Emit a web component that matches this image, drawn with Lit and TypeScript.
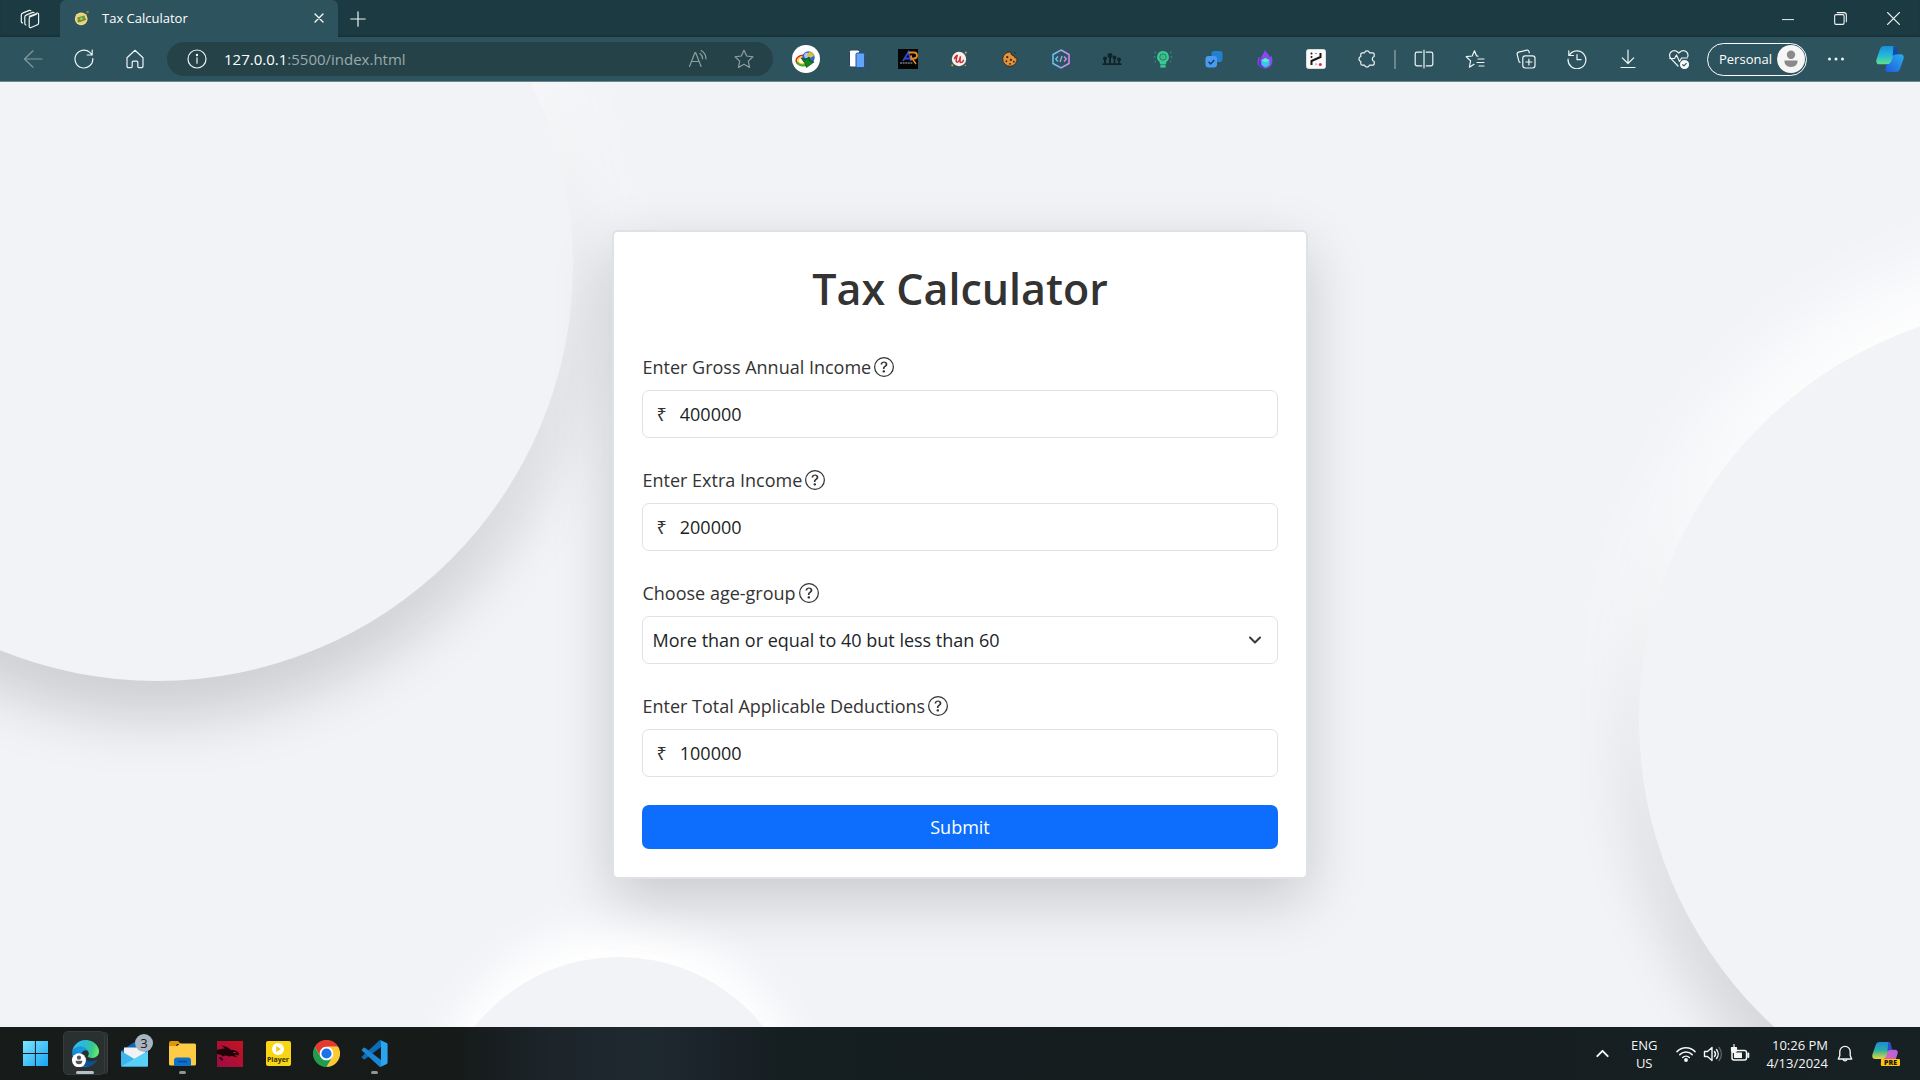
import { LitElement, html, css, svg, nothing } from "lit";
import { customElement, property } from "lit/decorators.js";

const line = (body: unknown, size = 20) => html`<svg
  class="icon"
  width=${size}
  height=${size}
  viewBox="0 0 20 20"
  fill="none"
  stroke="currentColor"
  stroke-width="1.2"
  stroke-linecap="round"
  stroke-linejoin="round"
  aria-hidden="true"
>${body}</svg>`;

const art = (body: unknown, size = 20, box = "0 0 20 20") => html`<svg
  class="icon"
  width=${size}
  height=${size}
  viewBox=${box}
  aria-hidden="true"
>${body}</svg>`;

const workspaces = svg`<path d="M9.200 7.200 16 4.800a1.400 1.400 0 0 1 2.600 1V14a2 2 0 0 1-1.200 1.800l-6.200 2.700a1.400 1.400 0 0 1-2-1.300V9.500a2 2 0 0 1 1.300-1.800l6-2.400"/><path d="M5.900 16a1.400 1.400 0 0 1-1.100-1.400V8a2 2 0 0 1 1.300-1.900l6.600-2.700a1.500 1.500 0 0 1 1.400.3"/><path d="M2.500 13.900A1.400 1.400 0 0 1 1.300 12.500V6a2 2 0 0 1 1.300-1.900l6.700-2.700a1.500 1.500 0 0 1 1.500.3"/>`;

const taxFavicon = svg`<circle cx="9" cy="11" r="8" fill="#f4dc8e"/><circle cx="9" cy="11" r="6.500" fill="#ecd07a"/><path d="M4 9.500 13 7l1.500 5-9 3z" fill="#6a9a3c"/><path d="m4.500 13 1 2 9-3-.4-1.500" stroke="#4c7c2c" fill="none"/><circle cx="9.200" cy="11" r="1.700" fill="#a8c66c"/><circle cx="17" cy="2.600" r="1.600" fill="#9a7a2c"/>`;

const back = svg`<path d="M19 10H1.500M10 1.800 1.500 10l8.500 8.200"/>`;
const reload = svg`<path d="M18.800 9.600A8.900 8.900 0 1 1 15.800 3.400L18 5.600M18.200 1v5h-5"/>`;
const home = svg`<path d="M2 8.700 10 1.300l8 7.400v8.600a1.300 1.300 0 0 1-1.300 1.300h-2.900a1 1 0 0 1-1-1v-4.400a1 1 0 0 0-1-1H8.200a1 1 0 0 0-1 1v4.400a1 1 0 0 1-1 1H3.300A1.300 1.300 0 0 1 2 17.300z"/>`;
const info = svg`<circle cx="10" cy="10" r="9"/><path d="M10 8.800v5.400"/><circle cx="10" cy="6" r=".6" fill="currentColor"/>`;
const readAloud = svg`<path d="m1.500 17.500 5.500-14h.6l5.500 14M3.500 12.500h7.600"/><path d="M12 4.500a7 7 0 0 1 2.600 5.300M13.200 1.500a10 10 0 0 1 4.800 8.300"/>`;
const star = svg`<path d="m10 1.200 2.700 5.800 6.300.8-4.700 4.300 1.200 6.300L10 15.300l-5.500 3.100 1.200-6.300L1 7.800 7.300 7z"/>`;
const puzzle = svg`<path d="M7.500 3.800a2.600 2.600 0 0 1 5 0h3.200A1.500 1.500 0 0 1 17.200 5.300V7.500a2.600 2.600 0 0 0 0 5v2.200a1.500 1.500 0 0 1-1.500 1.500h-3.200a2.600 2.600 0 0 1-5 0H5.300a1.500 1.500 0 0 1-1.500-1.500v-2.200a2.600 2.600 0 0 1 0-5V5.300a1.500 1.500 0 0 1 1.500-1.500z"/>`;
const splitView = svg`<path d="M7.800 3.200H3A1.800 1.800 0 0 0 1.200 5v10A1.800 1.800 0 0 0 3 16.800h4.800M12.200 3.200H17A1.800 1.800 0 0 1 18.800 5v10a1.800 1.800 0 0 1-1.800 1.800h-4.800M10 1v18"/>`;
const favourites = svg`<path d="M13 7.200 11.600 7 9.500 1.800 7.200 7 1.200 7.700l4.400 4.200-1.200 6.300L9 15.300M13 10h6M12 13.500h7M14 17h5"/>`;
const collections = svg`<rect x="6.800" y="6.800" width="12.200" height="12.200" rx="2.400"/><path d="M12.900 10v6M9.900 13h6"/><path d="M4 13.400a2 2 0 0 1-1.200-1.500L1.200 5.600a2 2 0 0 1 1.400-2.400l8-2a2 2 0 0 1 2.400 1.400l.3 1.200"/>`;
const history = svg`<path d="M1.800 1.800v4.700h4.700M2.300 6.300A8.900 8.900 0 1 1 1.100 10M10 5.500v5.200h4"/>`;
const download = svg`<path d="M10 1v13M4.300 8.800 10 14.500l5.700-5.700M3 18.500h14"/>`;
const essentials = svg`<path d="M9 17 2 9.700A4.600 4.600 0 0 1 2 3a4.600 4.600 0 0 1 6.600 0l1.200 1.200L11 3a4.600 4.600 0 0 1 6.600 0 4.700 4.700 0 0 1 1 5"/><path d="M.8 9.500h4.700L7.500 6l3 6.500L12.600 9h5.600"/><circle cx="15.500" cy="15.500" r="4" fill="#fff"/><path d="m13.700 15.700 1.300 1.200 2.300-2.500" stroke="#2d545e"/>`;

const idm = svg`<circle cx="14" cy="14" r="14" fill="#fff"/><ellipse cx="10" cy="15" rx="6" ry="4.600" fill="none" stroke="#e0261c" stroke-width="1.600" transform="rotate(-20 10 15)"/><ellipse cx="10.500" cy="15.500" rx="4.600" ry="3.500" fill="none" stroke="#f5d21c" stroke-width="1.500"/><path d="M5 17c2 3.500 6 4 9 3" stroke="#35b52c" stroke-width="2" fill="none"/><circle cx="16.500" cy="12.500" r="6.200" fill="#2f63c9"/><circle cx="14.800" cy="10.400" r="2.700" fill="#a8c8f4"/><path d="M17 7c3 0 5 2 5 4l-4 2-3-3z" fill="#d4c234"/><path d="m9 13 4.500 1.500L17 12l.500 3.500L22 17l-7.500 5.500L13 18.500z" fill="#0f8a1c" stroke="#052a08" stroke-width=".6"/>`;
const pages = svg`<rect x="2.500" y="1" width="10" height="17" rx="1.500" fill="#fff" stroke="#2c4464"/><rect x="9" y="4" width="8.500" height="14.500" rx="1.300" fill="#62a4f5" stroke="#24509a"/>`;
const apLogo = svg`<rect width="20" height="20" fill="#050505"/><path d="m5 12 5.500-9L13 12M7 9.500h5" fill="none" stroke="#3548c8" stroke-width="1.800"/><path d="M10.500 3.500H16a3 3 0 0 1 0 6l-2.500.5L13 6.500" fill="none" stroke="#e88a24" stroke-width="1.800"/><path d="M14.500 10 18 15" stroke="#e88a24" stroke-width="1.500"/><path d="M2 14h13" stroke="#b0b0b0" stroke-width="1.200" stroke-dasharray="2 .6"/>`;
const redU = svg`<circle cx="10" cy="10" r="8" fill="#fbeee6"/><path d="M5 9.500c1-2.500 2-3.500 3-3.500-1 3.500-2 7.500 0 7.500s3-3.500 3.600-6.500c-.6 3.500-1 7 .6 7s2-1 2.800-2.500" fill="none" stroke="#c4303a" stroke-width="1.700" stroke-linecap="round"/><circle cx="17.500" cy="3" r="1.200" fill="#c8a43c"/><circle cx="2.500" cy="17" r="1.200" fill="#c8a43c"/><circle cx="17" cy="17.300" r=".8" fill="#c8a43c"/>`;
const cookie = svg`<path d="M11 2.200A8 8 0 1 0 17.800 9a3 3 0 0 1-3.400-2.600A3.400 3.400 0 0 1 11 2.200z" fill="#e0923c" stroke="#3a2416"/><g fill="#3a2012"><circle cx="7" cy="8" r="1.200"/><circle cx="11" cy="11" r="1.200"/><circle cx="6" cy="12.500" r="1"/><circle cx="10" cy="15.400" r="1"/><circle cx="14.300" cy="13" r="1"/><circle cx="15.500" cy="3" r=".8"/></g>`;
const hexCode = svg`<defs><linearGradient id="hx" x1="0" x2="1"><stop offset="0" stop-color="#62c8f0"/><stop offset="1" stop-color="#e088f0"/></linearGradient></defs><path d="m10 1 8 4.500v9L10 19l-8-4.500v-9z" fill="none" stroke="url(#hx)" stroke-width="1.500"/><path d="M7 7.500 4.700 10 7 12.500M13 7.500l2.300 2.500-2.300 2.500M11 7l-2 6" fill="none" stroke="url(#hx)" stroke-width="1.300"/>`;
const people = svg`<g fill="#10242a"><circle cx="3" cy="9.500" r="2"/><circle cx="8" cy="6.500" r="2.500"/><circle cx="12.500" cy="8.500" r="2"/><circle cx="17" cy="10.500" r="2"/><path d="M2 10h2v5H2zM7 8h2v7H7zM11.700 9h1.600v6h-1.600zM16.200 11h1.600v4h-1.600zM.5 14.300h19V16H.5z"/></g>`;
const bulb = svg`<path d="M10 2a6 6 0 0 1 3.500 10.800L13 15H7l-.5-2.200A6 6 0 0 1 10 2z" fill="#3cc890"/><circle cx="10" cy="8" r="3.200" fill="none" stroke="#1f7c62"/><path d="M10 6.500v3M7.500 15.700h5v2.800h-5z" fill="#3cc890" stroke="#2a9c78"/><path d="M1.500 3 3 4M.8 8h1.700M1.800 13 3 12M18.500 3 17 4m2.200 4h-1.700m.7 5L17 12" stroke="#3ba484"/>`;
const checks = svg`<rect x="7.500" y="2" width="11" height="11" rx="3" fill="#2380d0"/><rect x="1.500" y="7" width="11.500" height="11.500" rx="3" fill="#4a9af0"/><path d="m4.500 12.800 2.200 2.200 3.600-4" fill="none" stroke="#173f70" stroke-width="1.500"/>`;
const flame = svg`<path d="M10 .5c1 3.500 4.500 4.500 4.500 8 1-.5 1.300-1.500 1.300-2.500 3 5 2.200 13-5.800 13.500C2 19 1 12 4.500 7.500c0 1.500.5 2.500 1.500 3C6 6 9.500 5 10 .5z" fill="#8a48f0"/><path d="M5 9c-3 5-1 9 4 10.300L6 15z" fill="#5a30d0"/><path d="m10.500 9 4 2.300v4.600l-4 2.600-4-2.600v-4.600z" fill="#38c8e0"/><path d="m10.500 9 4 2.300-4 2.300-4-2.300z" fill="#58f0c8"/>`;
const scatter = svg`<rect x=".5" y=".5" width="19" height="19" rx="2" fill="#fbfbfb" stroke="#dcdcdc"/><path d="M5.500 16v-4L14.500 8V4" fill="none" stroke="#161616" stroke-width="2"/><g fill="#161616"><circle cx="5.500" cy="4.500" r="1"/><circle cx="5.500" cy="8" r="1"/><circle cx="10" cy="4.500" r=".6"/><circle cx="10" cy="15" r=".6"/></g><circle cx="14.300" cy="15.500" r="1.500" fill="#e02458"/>`;

const copilot = (id: string, stops: string[]) => svg`<defs>
  <linearGradient id="${id}a" x1="0" y1="0" x2="0" y2="1"><stop offset="0" stop-color=${stops[0]}/><stop offset=".5" stop-color=${stops[1]}/><stop offset="1" stop-color=${stops[2]}/></linearGradient>
  <linearGradient id="${id}b" x1="1" y1="0" x2="0" y2="1"><stop offset="0" stop-color=${stops[3]}/><stop offset="1" stop-color=${stops[4]}/></linearGradient></defs>
  <path d="M8 1h9.500c2.300 0 2.700 2 2 4l-3.200 10.500C15.500 18 14 19.300 12 19.300H3.500C.5 19.300-.3 17 .6 14L4 4.300C4.700 2.200 6 1 8 1z" fill="url(#${id}a)"/>
  <path d="M20.500 9.300h4c3 0 3.800 2 2.900 5L24 24c-.7 2-2 3-4 3h-8c-2.500 0-3-1.500-2.400-3.500.3-1 .8-2.600 1-4.200 2.500.3 4-1 5-4l1.500-4c.6-1.300 1.700-2 3.400-2z" fill="url(#${id}b)"/>
  <path d="M17.500 1c1.700.2 2.500 1.500 3 3.300l1.500 5h-2.400c-1.500 0-2.500.9-3 2.300z" fill=${stops[5]}/>`;

const windowsLogo = svg`<defs><linearGradient id="wl" x1="0" y1="0" x2="1" y2="1"><stop offset="0" stop-color="#7ce4ff"/><stop offset="1" stop-color="#18a4f4"/></linearGradient></defs><path d="M0 0h12.400v12.400H0zM13.400 0H26v12.400H13.400zM0 13.400h12.400V26H0zM13.400 13.400H26V26H13.400z" fill="url(#wl)"/>`;
const edge = svg`<defs><linearGradient id="e1" x1="0" x2="1"><stop offset="0" stop-color="#0c59a4"/><stop offset="1" stop-color="#114a8b"/></linearGradient><linearGradient id="e2" x1="1" y1="0" x2="0" y2="1"><stop offset="0" stop-color="#1b9de2"/><stop offset=".5" stop-color="#1595df"/><stop offset="1" stop-color="#0667b2"/></linearGradient><linearGradient id="e3" x1="0" y1=".3" x2="1" y2=".5"><stop offset="0" stop-color="#35c1f1"/><stop offset=".4" stop-color="#2cb8d8"/><stop offset=".75" stop-color="#36c88c"/><stop offset="1" stop-color="#66eb6e"/></linearGradient></defs>
<path fill="url(#e1)" d="M231.070 190.540c-3.400 1.790-6.920 3.360-10.530 4.700a101.500 101.500 0 0 1-35.800 6.460c-47.180 0-88.280-32.450-88.280-74.100a31.400 31.400 0 0 1 16.360-27.220c-42.700 1.800-53.650 46.290-53.650 72.340 0 73.650 67.880 81.120 82.500 81.120 7.890 0 19.790-2.300 26.940-4.560l1.300-.43a128.340 128.340 0 0 0 66.600-52.800 4 4 0 0 0-5.440-5.510z"/><path fill="url(#e2)" d="M105.730 241.420a79.200 79.200 0 0 1-22.740-21.340 80.720 80.720 0 0 1 29.820-119.700c3.130-1.500 8.470-4.100 15.620-3.990a32.400 32.400 0 0 1 25.700 13.010 31.880 31.880 0 0 1 6.350 18.680c0-.2 24.460-79.600-80-79.600-43.900 0-80 41.660-80 78.210 0 19.380 4.100 38.600 12.120 56.100a128 128 0 0 0 156.660 67.110 75.500 75.500 0 0 1-63.530-8.480z"/><path fill="url(#e3)" d="M152.330 148.860c-.81 1.050-3.300 2.500-3.300 5.650 0 2.610 1.700 5.120 4.720 7.230 14.380 10 41.490 8.670 41.560 8.670 10.650 0 21.100-2.870 30.270-8.300a61.400 61.400 0 0 0 30.420-52.880c.25-22.400-8.010-37.300-11.350-43.880-21.200-41.470-66.970-65.300-116.740-65.300a128 128 0 0 0-128 126.200c.48-36.540 36.800-66.060 80-66.060 3.500 0 23.470.34 42.010 10.070 16.340 8.580 24.900 18.940 30.850 29.200 6.180 10.680 7.280 24.160 7.280 29.530 0 5.380-2.750 13.340-7.720 19.870z"/><circle cx="66" cy="192" r="66" fill="#fff"/><circle cx="66" cy="168" r="20" fill="#555"/><path d="M34 196h64c0 22-12 34-32 34s-32-12-32-34z" fill="#555"/>`;
const mail = svg`<path d="M0 11 13.500 2 27 11v13.500H0z" fill="#1467b8"/><path d="M3 7.500h21V16l-10.500 5L3 16z" fill="#f2f2f4"/><path d="m0 11 13.500 8L27 11v14.500a1 1 0 0 1-1 1H1a1 1 0 0 1-1-1z" fill="#3db4ec"/><path d="M27 11v14.500a1 1 0 0 1-1 1H1a1 1 0 0 1-.7-.3z" fill="#58d0f8"/>`;
const folder = svg`<path d="M0 3a2 2 0 0 1 2-2h7l3 3h-4L6 8H0z" fill="#e0960c"/><path d="M0 6h8l3-2.500h14.500A1.500 1.500 0 0 1 27 5v19a1.500 1.500 0 0 1-1.500 1.500h-24A1.500 1.500 0 0 1 0 24z" fill="#fdcb45"/><path d="M5 26v-5.500a3 3 0 0 1 3-3h11a3 3 0 0 1 3 3V26z" fill="#0f70c8"/><path d="M9 21.500h9" stroke="#0a4c90" stroke-width="1.500"/>`;
const dragon = svg`<defs><linearGradient id="dr" x1="0" y1="1" x2="1" y2="0"><stop offset="0" stop-color="#9c0c44"/><stop offset="1" stop-color="#c41420"/></linearGradient></defs><rect width="26" height="26" fill="url(#dr)"/><path d="M0 9c4-1 6-1.500 8-1.500L4.500 4.500C9 5 12 7 14 9c3-.5 5.500.5 8 3l-.5 2.500-4.500-1 3.500 3L15 15l-3 .500c-3-1.500-4.500-1.500-6 0C4.500 14 2.500 13 0 13z" fill="#1c0408"/><path d="M2 16c3 0 4 1.500 4 4l-3-2z" fill="#1c0408"/><path d="M16.500 11.500h2" stroke="#d02838"/>`;
const chrome = svg`<circle cx="24" cy="24" r="23" fill="#fff"/><path d="M24 12h20.800A24 24 0 0 0 3.200 12l10.400 18A12 12 0 0 1 24 12z" fill="#e33b2e"/><path d="M34.400 30 24 48A24 24 0 0 0 44.800 12H24a12 12 0 0 1 10.400 18z" fill="#fcc934"/><path d="M13.600 30 3.200 12A24 24 0 0 0 24 48l10.400-18a12 12 0 0 1-20.800 0z" fill="#1f9d4c"/><circle cx="24" cy="24" r="11.500" fill="#fff"/><circle cx="24" cy="24" r="9" fill="#1a73e8"/>`;
const vscode = svg`<path d="M94 11 74 1.500a6 6 0 0 0-7 1.200L4 60a4 4 0 0 0 0 6l5.500 5a4 4 0 0 0 5 .2L90 14z" fill="#0b6cb8"/><path d="M94 89 74 98.500a6 6 0 0 1-7-1.200L4 40a4 4 0 0 1 0-6l5.500-5a4 4 0 0 1 5-.2L90 86z" fill="#1a86d4"/><path d="M74 98.500a6 6 0 0 1-7-1.200c2.500 2.400 7 .6 7-2.800V5.500c0-3.400-4.500-5.200-7-2.800a6 6 0 0 1 7-1.200l21 10a6 6 0 0 1 3.500 5.500v66a6 6 0 0 1-3.500 5.500z" fill="#2ba4ee"/>`;

const wifi = svg`<path d="M1 7.600a12.700 12.700 0 0 1 18 0M3.800 10.600a8.800 8.800 0 0 1 12.400 0M6.700 13.500a4.700 4.700 0 0 1 6.600 0" stroke-width="1.500"/><circle cx="10" cy="16" r="1.300" fill="currentColor"/>`;
const speaker = svg`<path d="M1.500 7.500h3L9 3.500v13l-4.500-4h-3z" stroke-width="1.400"/><path d="M11.500 7.500a4 4 0 0 1 0 5M13.500 5.500a7 7 0 0 1 0 9" stroke-width="1.400"/><path d="M16 3.500a10 10 0 0 1 0 13" opacity=".35"/>`;
const battery = svg`<rect x="2" y="6.500" width="14.500" height="9.500" rx="2" stroke-width="1.500"/><path d="M4 8.500h8V14H4z" fill="currentColor" stroke="none"/><path d="M18.300 9.500v3.500" stroke-width="2"/><path d="M4 .5v3M1.500 5V3.500h5V6a2.500 2.500 0 0 1-5 0z" fill="currentColor"/>`;
const bell = svg`<path d="M10 1.500a5.800 5.800 0 0 0-5.800 5.800V12l-1.700 3.500h15L15.800 12V7.300A5.800 5.800 0 0 0 10 1.500zM7.800 16a2.300 2.300 0 0 0 4.400 0" stroke-width="1.500"/>`;

const tools = [
  { name: "Extensions", icon: line(puzzle) },
  { name: "Split screen", icon: line(splitView) },
  { name: "Favorites", icon: line(favourites) },
  { name: "Collections", icon: line(collections) },
  { name: "History", icon: line(history) },
  { name: "Downloads", icon: line(download) },
  { name: "Browser essentials", icon: line(essentials) },
];

const extensions = [
  { name: "Download manager", icon: art(idm, 28, "0 0 28 28") },
  { name: "Mobile simulator", icon: art(pages) },
  { name: "AP tools", icon: art(apLogo) },
  { name: "Course helper", icon: art(redU, 18) },
  { name: "Cookie editor", icon: art(cookie, 18) },
  { name: "Code helper", icon: art(hexCode) },
  { name: "Audience", icon: art(people) },
  { name: "Hints", icon: art(bulb) },
  { name: "Tasks", icon: art(checks) },
  { name: "Flame", icon: art(flame) },
  { name: "Scatter", icon: art(scatter) },
];

@customElement("browser-bar")
export class BrowserBar extends LitElement {
  static styles = css`
    :host {
      display: block;
      color: #eef4f5;
      background: #2d545e;
      border-bottom: 1px solid #6b878e;
      font: 13px/20px "Open Sans", "Noto Sans", sans-serif;
    }
    .icon {
      display: block;
      flex: none;
    }
    button {
      font: inherit;
      color: inherit;
      background: none;
      border: 0;
      padding: 0;
      display: grid;
      place-items: center;
      flex: none;
    }
    .strip {
      display: flex;
      height: 37px;
      background: #1b3a41;
      box-shadow: inset 0 -2px 2px -1px #142e34;
    }
    .workspaces {
      width: 60px;
    }
    .tab {
      width: 278px;
      display: flex;
      align-items: center;
      gap: 12px;
      padding: 0 9px 2px 14px;
      box-sizing: border-box;
      background: #2d545e;
      border-radius: 6px 6px 0 0;
      color: #fff;
    }
    .tab-title {
      flex: 1;
    }
    .close {
      width: 20px;
      height: 20px;
    }
    .new {
      width: 40px;
    }
    .spacer {
      flex: 1;
    }
    .win {
      width: 53px;
    }
    .tools {
      display: flex;
      align-items: center;
      height: 44px;
      padding: 0 5px 0 7px;
    }
    .slot {
      width: 51px;
      height: 44px;
    }
    .dim {
      color: #81999f;
    }
    .address {
      flex: 1;
      min-width: 200px;
      display: flex;
      align-items: center;
      height: 34px;
      margin: 0 7px;
      padding: 0 6px 0 20px;
      border-radius: 17px;
      background: #264249;
      font-size: 15px;
    }
    .url {
      flex: 1;
      margin-left: 17px;
      color: #9ca9ac;
    }
    .host {
      color: #fff;
    }
    .address .slot {
      width: 46px;
      height: 34px;
      color: #8d9da1;
    }
    .divider {
      width: 2px;
      height: 19px;
      margin: 0 2px;
      background: #6b878e;
    }
    .profile {
      display: flex;
      align-items: center;
      justify-content: space-between;
      width: 100px;
      height: 33px;
      box-sizing: border-box;
      margin: 0 3px;
      padding: 0 1px 0 11px;
      border: 1px solid #fff;
      border-radius: 17px;
      color: #fff;
    }
    .assistant {
      margin-left: 3px;
    }
  `;

  render() {
    return html`
      <div class="strip">
        <button class="workspaces" aria-label="Workspaces">${line(workspaces)}</button>
        <div class="tab">
          ${art(taxFavicon, 16)}
          <span class="tab-title">Tax Calculator</span>
          <button class="close" aria-label="Close tab">
            ${line(svg`<path d="m2 2 16 16M18 2 2 18" stroke-width="2.600"/>`, 10)}
          </button>
        </div>
        <button class="new" aria-label="New tab">${line(svg`<path d="M10 1v18M1 10h18" stroke-width="1.500"/>`, 16)}</button>
        <div class="spacer"></div>
        <button class="win" aria-label="Minimize">${line(svg`<path d="M0 11h20" stroke-width="1.600"/>`, 12)}</button>
        <button class="win" aria-label="Restore">
          ${line(svg`<rect x="1" y="4" width="14.500" height="15" rx="2" stroke-width="1.700"/><path d="M5 1h10a4 4 0 0 1 4 4v10" stroke-width="1.700"/>`, 13)}
        </button>
        <button class="win" aria-label="Close">${line(svg`<path d="m1 1 18 18M19 1 1 19" stroke-width="2"/>`, 13)}</button>
      </div>
      <div class="tools">
        <button class="slot dim" aria-label="Back">${line(back)}</button>
        <button class="slot" aria-label="Refresh">${line(reload)}</button>
        <button class="slot" aria-label="Home">${line(home)}</button>
        <div class="address">
          ${line(info)}
          <span class="url"><span class="host">127.0.0.1</span>:5500/index.html</span>
          <button class="slot" aria-label="Read aloud">${line(readAloud)}</button>
          <button class="slot" aria-label="Add to favorites">${line(star)}</button>
        </div>
        ${extensions.map((e) => html`<button class="slot" aria-label=${e.name}>${e.icon}</button>`)}
        ${tools.map(
          (t, i) => html`<button class="slot" aria-label=${t.name}>${t.icon}</button>${i === 0
              ? html`<span class="divider"></span>`
              : nothing}`
        )}
        <button class="profile">
          Personal
          ${art(svg`<circle cx="14" cy="14" r="14" fill="#f6f6f6"/><circle cx="14" cy="9.700" r="4.200" fill="#8a8a8a"/><path d="M7.500 15.500h13c.5 3.500-2 6.500-6.500 6.500s-7-3-6.500-6.500z" fill="#8a8a8a"/>`, 28, "0 0 28 28")}
        </button>
        <button class="slot" aria-label="Settings and more">
          ${art(svg`<g fill="#eef4f5"><circle cx="3.500" cy="10" r="1.500"/><circle cx="10" cy="10" r="1.500"/><circle cx="16.500" cy="10" r="1.500"/></g>`)}
        </button>
        <button class="slot assistant" aria-label="Copilot">
          ${art(copilot("cb", ["#1c8cd8", "#22b8dc", "#62e088", "#28b0ec", "#2058e0", "#1048b8"]), 28, "0 0 28 28")}
        </button>
      </div>
    `;
  }
}

@customElement("money-field")
export class MoneyField extends LitElement {
  @property() label = "";
  @property() value = "";

  static styles = css`
    :host {
      display: block;
      color: #333;
      font: 18px/28px "Open Sans", "Noto Sans", sans-serif;
    }
    .caption {
      display: flex;
      align-items: center;
      gap: 3px;
      margin-bottom: 9px;
    }
    .box {
      display: flex;
      align-items: center;
      gap: 13px;
      height: 48px;
      box-sizing: border-box;
      padding: 0 13px;
      border: 1px solid #dee2e6;
      border-radius: 7px;
      background: #fff;
    }
    input {
      flex: 1;
      min-width: 0;
      border: 0;
      padding: 0;
      outline: 0;
      background: none;
      font: inherit;
      color: #1c1f22;
    }
  `;

  render() {
    return html`
      <div class="caption"><label for="amount">${this.label}</label><help-mark></help-mark></div>
      <div class="box">
        <span>₹</span>
        <input id="amount" type="text" inputmode="numeric" .value=${this.value} />
      </div>
    `;
  }
}

@customElement("help-mark")
export class HelpMark extends LitElement {
  static styles = css`
    :host {
      display: block;
    }
    svg {
      display: block;
    }
  `;

  render() {
    return html`<svg width="20" height="20" viewBox="0 0 16 16" fill="#333" aria-hidden="true">
      <path d="M8 15A7 7 0 1 1 8 1a7 7 0 0 1 0 14m0 1A8 8 0 1 0 8 0a8 8 0 0 0 0 16" />
      <path
        d="M5.255 5.786a.237.237 0 0 0 .241.247h.825c.138 0 .248-.113.266-.25.09-.656.540-1.134 1.342-1.134.686 0 1.314.343 1.314 1.168 0 .635-.374.927-.965 1.371-.673.489-1.206 1.060-1.168 1.987l.003.217a.25.25 0 0 0 .25.246h.811a.25.25 0 0 0 .25-.25v-.105c0-.718.273-.927 1.010-1.486.609-.463 1.244-.977 1.244-2.056 0-1.511-1.276-2.241-2.673-2.241-1.267 0-2.655.590-2.750 2.286m1.557 5.763c0 .533.425.927 1.010.927.609 0 1.028-.394 1.028-.927 0-.552-.420-.940-1.029-.940-.584 0-1.009.388-1.009.940"
      />
    </svg>`;
  }
}

@customElement("tax-page")
export class TaxPage extends LitElement {
  static styles = css`
    :host {
      position: relative;
      display: flex;
      align-items: center;
      justify-content: center;
      overflow: hidden;
      background: #f1f3f7;
      color: #333;
      font: 18px/28px "Open Sans", "Noto Sans", sans-serif;
    }
    .disc {
      position: absolute;
      border-radius: 50%;
      background: #f1f3f7;
      box-shadow: 0 -50px 80px #fff, 0 32px 64px rgba(0, 0, 0, 0.175);
    }
    .disc.left {
      width: 832px;
      height: 832px;
      left: -259px;
      top: -233px;
    }
    .disc.right {
      width: 832px;
      height: 832px;
      right: -551px;
      bottom: -109px;
    }
    .disc.low {
      width: 370px;
      height: 370px;
      left: 434px;
      bottom: -300px;
      box-shadow: 0 -30px 44px #fff;
    }
    .card {
      position: relative;
      width: 36.2%;
      min-width: 400px;
      box-sizing: border-box;
      margin: 40px 0;
      padding: 28px;
      display: flex;
      flex-direction: column;
      gap: 28px;
      background: #fff;
      border: 2px solid #dee2e6;
      border-radius: 6px;
      box-shadow: 0 20px 60px rgba(0, 0, 0, 0.175);
    }
    h1 {
      margin: 0 0 7px;
      text-align: center;
      font-size: 43px;
      font-weight: 600;
      line-height: 58px;
    }
    .caption {
      display: flex;
      align-items: center;
      gap: 3px;
      margin-bottom: 9px;
    }
    .choice {
      position: relative;
      display: flex;
      align-items: center;
    }
    select {
      appearance: none;
      width: 100%;
      height: 48px;
      padding: 0 40px 0 9px;
      border: 1px solid #dee2e6;
      border-radius: 7px;
      background: #fff;
      color: #212529;
      font: inherit;
    }
    .chevron {
      position: absolute;
      right: 16px;
      pointer-events: none;
    }
    .submit {
      height: 44px;
      border: 0;
      border-radius: 7px;
      background: #0d6efd;
      color: #fff;
      font: inherit;
    }
  `;

  render() {
    return html`
      <div class="disc left"></div>
      <div class="disc right"></div>
      <div class="disc low"></div>
      <form class="card" @submit=${(e: Event) => e.preventDefault()}>
        <h1>Tax Calculator</h1>
        <money-field label="Enter Gross Annual Income" value="400000"></money-field>
        <money-field label="Enter Extra Income" value="200000"></money-field>
        <div>
          <div class="caption"><label for="age">Choose age-group</label><help-mark></help-mark></div>
          <div class="choice">
            <select id="age">
              <option>More than or equal to 40 but less than 60</option>
            </select>
            <svg class="chevron" width="14" height="14" viewBox="0 0 14 14" fill="none" stroke="#343a40" stroke-width="2" stroke-linecap="round" stroke-linejoin="round" aria-hidden="true"><path d="m2 4.500 5 5 5-5" /></svg>
          </div>
        </div>
        <money-field label="Enter Total Applicable Deductions" value="100000"></money-field>
        <button class="submit" type="submit">Submit</button>
      </form>
    `;
  }
}

@customElement("task-bar")
export class TaskBar extends LitElement {
  static styles = css`
    :host {
      display: flex;
      height: 53px;
      box-sizing: border-box;
      padding: 0 16px 0 10px;
      color: #f4f6f6;
      background: linear-gradient(90deg, #171c1b 0%, #161b1a 24%, #1d252b 29%, #1e292f 34%, #1b232a 37%, #151e20 41%, #151d1f 60%, #172022 100%);
      font: 13px/18px "Open Sans", "Noto Sans", sans-serif;
    }
    .icon {
      display: block;
    }
    button {
      position: relative;
      display: grid;
      place-items: center;
      width: 48px;
      height: 53px;
      padding: 0;
      border: 0;
      background: none;
      color: inherit;
      font: inherit;
    }
    .wide {
      width: 50px;
    }
    .active::before {
      content: "";
      position: absolute;
      inset: 4px 5px 5px 3px;
      border: 1px solid #363b3b;
      border-radius: 5px;
      background: #2a2f2f;
      box-shadow: 3px 0 0 -1px #2a2f2f, 4px 0 0 -1px #3a3f3f;
    }
    .active .icon {
      position: relative;
    }
    .mark {
      position: absolute;
      bottom: 6px;
      width: 7px;
      height: 3px;
      border-radius: 2px;
      background: #8f9494;
    }
    .active .mark {
      width: 18px;
      background: #b4c0cc;
    }
    .badge {
      position: absolute;
      top: 7px;
      right: 5px;
      width: 18px;
      height: 18px;
      border-radius: 9px;
      background: #a9b6c1;
      color: #16191b;
      text-align: center;
    }
    .player {
      display: flex;
      flex-direction: column;
      align-items: center;
      box-sizing: border-box;
      width: 25px;
      height: 25px;
      padding-top: 2px;
      border-radius: 2px;
      background: #f8d614;
      color: #3a3000;
      font-size: 7px;
      font-weight: 700;
      line-height: 9px;
    }
    .tray {
      display: flex;
      align-items: center;
      margin-left: auto;
    }
    .tray button {
      width: auto;
    }
    .tray .lang {
      margin: 0 19px 0 22px;
      text-align: center;
      display: block;
    }
    .tray .status {
      display: flex;
      gap: 7px;
    }
    .clock {
      margin: 0 8px 0 16px;
      text-align: right;
    }
    .tray .copilot {
      margin-left: 18px;
      padding-right: 6px;
    }
    .pre {
      position: absolute;
      right: 4px;
      bottom: 14px;
      padding: 0 3px;
      border-radius: 1px;
      background: #fcc414;
      color: #1a1400;
      font-size: 7px;
      line-height: 7px;
      font-weight: 800;
    }
  `;

  render() {
    return html`
      <button class="wide" aria-label="Start">${art(windowsLogo, 25, "0 0 26 26")}</button>
      <button class="wide active" aria-label="Edge">${art(edge, 27, "0 0 256 256")}<span class="mark"></span></button>
      <button aria-label="Mail">${art(mail, 27, "0 0 27 27")}<span class="badge">3</span></button>
      <button aria-label="File Explorer">${art(folder, 27, "0 0 27 27")}<span class="mark"></span></button>
      <button aria-label="Dragon">${art(dragon, 26, "0 0 26 26")}</button>
      <button>
        <span class="player">
          ${art(svg`<circle cx="10" cy="10" r="10" fill="#fff"/><path d="m7 5 8 5-8 5z" fill="#f0c814"/>`, 12)}
          Player
        </span>
      </button>
      <button aria-label="Chrome">${art(chrome, 27, "0 0 48 48")}</button>
      <button aria-label="Visual Studio Code">${art(vscode, 27, "0 0 100 100")}<span class="mark"></span></button>
      <div class="tray">
        <button aria-label="Show hidden icons">${line(svg`<path d="m2 14 8-8 8 8" stroke-width="3"/>`, 13)}</button>
        <button class="lang">ENG<br />US</button>
        <button class="status" aria-label="Network, sound and battery">
          ${line(wifi)}${line(speaker)}${line(battery)}
        </button>
        <div class="clock">10:26 PM<br />4/13/2024</div>
        <button aria-label="Notifications">${line(bell, 18)}</button>
        <button class="copilot">
          ${art(copilot("ct", ["#1c88e0", "#2cb0a0", "#e8d83c", "#b060f0", "#f06890", "#2a50c8"]), 26, "0 0 28 28")}
          <span class="pre">PRE</span>
        </button>
      </div>
    `;
  }
}

@customElement("app-root")
export class AppRoot extends LitElement {
  static styles = css`
    :host {
      display: flex;
      flex-direction: column;
      min-height: 100vh;
    }
    tax-page {
      flex: 1;
    }
  `;

  render() {
    return html`<browser-bar></browser-bar><tax-page></tax-page><task-bar></task-bar>`;
  }
}
